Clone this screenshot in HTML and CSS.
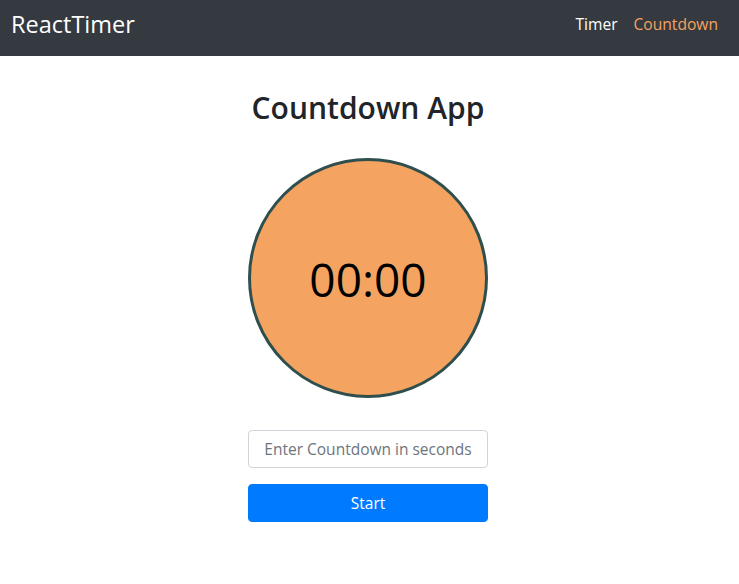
FILE: index.html
```html
<!DOCTYPE html>
<html lang="en">
<head>
<meta charset="utf-8">
<title>ReactTimer</title>
<link rel="stylesheet" href="styles.css">
</head>
<body>
<nav class="navbar">
  <a class="brand" href="#">ReactTimer</a>
  <ul class="nav-links">
    <li><a class="nav-link" href="#">Timer</a></li>
    <li><a class="nav-link active" href="#">Countdown</a></li>
  </ul>
</nav>
<main class="main">
  <h1 class="title">Countdown App</h1>
  <div class="clock">
    <span class="clock-text">00:00</span>
  </div>
  <form class="countdown-form">
    <input class="form-control" type="text" placeholder="Enter Countdown in seconds">
    <button class="btn-start" type="button">Start</button>
  </form>
</main>
</body>
</html>
```
FILE: styles.css
```css
* { box-sizing: border-box; }
body {
  margin: 0;
  font-family: "Open Sans", "DejaVu Sans", sans-serif;
  color: #212529;
  background: #fff;
}
.navbar {
  height: 56px;
  background: #343a40;
  display: flex;
  align-items: center;
  justify-content: space-between;
  padding: 0 21px 8px 11px;
}
.brand {
  color: #fff;
  text-decoration: none;
  font-size: 23.5px;
}
.nav-links {
  list-style: none;
  margin: 0;
  padding: 0;
  display: flex;
  gap: 16px;
}
.nav-link {
  color: #fff;
  text-decoration: none;
  font-size: 15.6px;
}
.nav-link.active { color: #f4a261; }
.main {
  display: flex;
  flex-direction: column;
  align-items: center;
  padding-right: 3px;
}
.title {
  margin: 34px 0 32px;
  font-size: 30px;
  font-weight: 600;
  line-height: 1.2;
}
.clock {
  width: 240px;
  height: 240px;
  border-radius: 50%;
  background: #f4a460;
  border: 3px solid #2f4f4f;
  display: flex;
  align-items: center;
  justify-content: center;
}
.clock-text {
  font-size: 46px;
  color: #000;
  margin-top: 2px;
}
.countdown-form {
  width: 240px;
  margin-top: 32px;
  display: flex;
  flex-direction: column;
  gap: 16px;
}
.form-control {
  height: 38px;
  width: 100%;
  border: 1px solid #ced4da;
  border-radius: 4px;
  padding: 6px 12px;
  font-family: inherit;
  font-size: 15.5px;
  text-align: center;
  color: #495057;
}
.form-control::placeholder { color: #6c757d; }
.btn-start {
  height: 38px;
  width: 100%;
  border: 1px solid #007bff;
  background: #007bff;
  color: #fff;
  border-radius: 4px;
  font-family: inherit;
  font-size: 15.5px;
}
```
